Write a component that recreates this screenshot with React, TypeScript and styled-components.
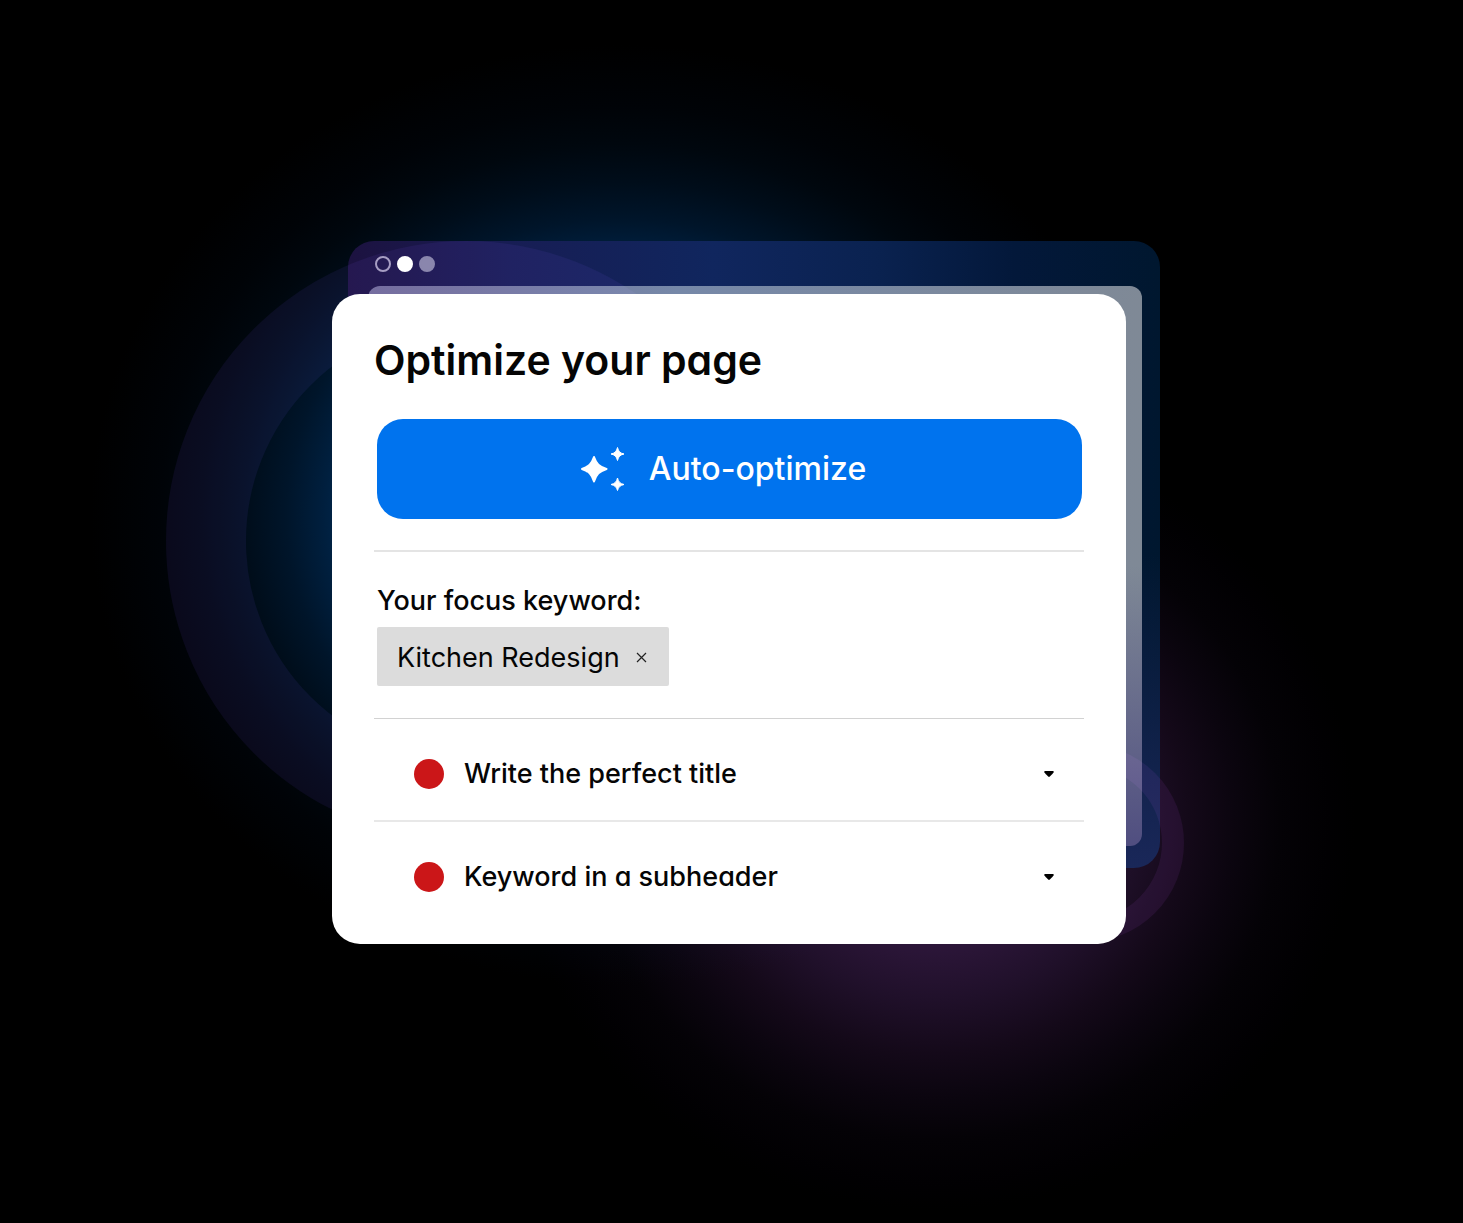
import React from "react";
import styled, { createGlobalStyle } from "styled-components";

const GlobalStyle = createGlobalStyle`
  *, *::before, *::after { box-sizing: border-box; }
  body {
    margin: 0;
    background: #000;
    color: #050505;
    font-family: Inter, "Liberation Sans", sans-serif;
    font-feature-settings: "cv11" 1;
  }
  button {
    font: inherit;
    font-feature-settings: inherit;
    color: inherit;
    border: 0;
    background: none;
    cursor: pointer;
  }
`;

const Page = styled.main`
  min-height: 100vh;
  display: flex;
  align-items: center;
  justify-content: center;
  padding: 15px 5px 0 0;
  overflow: hidden;
`;

const Stage = styled.div`
  position: relative;
  isolation: isolate;
  width: 100%;
  max-width: 794px;
`;

const Glow = styled.div<{ $x: number; $y: number; $rx: number; $ry: number; $stops: string }>`
  position: absolute;
  z-index: -4;
  left: ${(p) => p.$x - p.$rx}px;
  top: ${(p) => p.$y - p.$ry}px;
  width: ${(p) => p.$rx * 2}px;
  height: ${(p) => p.$ry * 2}px;
  background: radial-gradient(closest-side, ${(p) => p.$stops});
  mix-blend-mode: screen;
  pointer-events: none;
`;

const Ring = styled.div<{ $x: number; $y: number; $radius: number; $band: number; $color: string }>`
  position: absolute;
  z-index: -1;
  left: ${(p) => p.$x - p.$radius}px;
  top: ${(p) => p.$y - p.$radius}px;
  width: ${(p) => p.$radius * 2}px;
  height: ${(p) => p.$radius * 2}px;
  border: ${(p) => p.$band}px solid ${(p) => p.$color};
  border-radius: 50%;
  mix-blend-mode: screen;
  pointer-events: none;
`;

const BackWindow = styled.div`
  position: absolute;
  z-index: -2;
  inset: -53px -34px 76px 16px;
  display: flex;
  flex-direction: column;
  padding: 0 18px 22px 20px;
  border-radius: 26px;
  background:
    linear-gradient(180deg, transparent 50%, rgba(30, 42, 96, 0.85) 100%),
    linear-gradient(90deg, #1c1240 0%, #171d54 20%, #10265e 45%, #0a2250 65%, #03183a 82%, #00172f 100%);
`;

const WindowBar = styled.div`
  flex: none;
  height: 45px;
  display: flex;
  align-items: center;
  gap: 6px;
  padding-left: 7px;
`;

const WindowDot = styled.span<{ $fill: string; $ring: string }>`
  width: 16px;
  height: 16px;
  border-radius: 50%;
  background: ${(p) => p.$fill};
  border: 2px solid ${(p) => p.$ring};
`;

const WindowPane = styled.div`
  flex: 1;
  border-radius: 12px;
  background:
    linear-gradient(180deg, transparent 50%, #504e80 100%),
    linear-gradient(90deg, #6f6a96 0%, #7688a8 40%, #7f8996 100%);
`;

const Card = styled.section`
  padding: 40px 42px 21px;
  border-radius: 28px;
  background: #fff;
`;

const Title = styled.h1`
  margin: 0 0 33px;
  font-size: 41px;
  line-height: 52px;
  font-weight: 600;
  white-space: nowrap;
`;

const PrimaryButton = styled.button`
  display: flex;
  align-items: center;
  justify-content: center;
  gap: 24px;
  width: calc(100% - 5px);
  height: 100px;
  margin: 0 2px 31px 3px;
  padding: 0 12px 0 0;
  border-radius: 26px;
  background: #0073ee;
  color: #fff;
  font-size: 32px;
  line-height: 40px;
  font-weight: 500;
`;

const Keyword = styled.div`
  display: flex;
  flex-direction: column;
  align-items: flex-start;
  gap: 8px;
  padding: 31px 3px 32px;
  border-top: 2px solid #e4e4e4;
  border-bottom: 1px solid #d2d2d2;
`;

const KeywordLabel = styled.div`
  font-size: 27px;
  line-height: 36px;
  font-weight: 500;
`;

const Chip = styled.div`
  display: flex;
  align-items: center;
  gap: 16px;
  height: 59px;
  padding: 2px 22px 0 20px;
  border-radius: 2px;
  background: #dcdcdc;
  font-size: 27px;
  line-height: 36px;
`;

const ChipRemove = styled.button`
  display: flex;
  padding: 0;
`;

const TaskList = styled.ul`
  list-style: none;
  margin: 0;
  padding: 0;
`;

const Task = styled.li`
  & + & { border-top: 2px solid #e8e8e8; }
`;

const TaskButton = styled.button`
  display: flex;
  align-items: center;
  gap: 20px;
  width: 100%;
  height: 101px;
  padding: 9px 30px 0 40px;
  text-align: left;
  font-size: 27px;
  line-height: 36px;
  font-weight: 500;
`;

const Status = styled.span`
  flex: none;
  width: 30px;
  height: 30px;
  border-radius: 50%;
  background: #cb1618;
`;

const TaskName = styled.span`
  flex: 1;
`;

const Sparkles = () => (
  <svg width="44" height="44" viewBox="0 0 44 44" fill="#fff" stroke="#fff" strokeLinejoin="round" aria-hidden="true">
    <path strokeWidth="2" d="M13 10 C15.500 17 18 19.500 25.500 22 C18 24.500 15.500 27 13 34.500 C10.500 27 8 24.500 1 22 C8 19.500 10.500 17 13 10Z" />
    <path strokeWidth="1" d="M36.500 0.500 C37.500 4.500 39 6 43 7 C39 8 37.500 9.500 36.500 13.500 C35.500 9.500 34 8 30 7 C34 6 35.500 4.500 36.500 0.500Z" />
    <path strokeWidth="1" d="M36.500 31 C37.500 35 39 36.500 43 37.500 C39 38.500 37.500 40 36.500 43.500 C35.500 40 34 38.500 30 37.500 C34 36.500 35.500 35 36.500 31Z" />
  </svg>
);

const Cross = () => (
  <svg width="11" height="11" viewBox="0 0 11 11" fill="none" stroke="#222" strokeWidth="1.200" aria-hidden="true">
    <path d="M1 1 L10 10 M10 1 L1 10" />
  </svg>
);

const Caret = () => (
  <svg width="10" height="6" viewBox="0 0 10 6" fill="#000" aria-hidden="true">
    <path d="M1 0 H9 Q10 0 9.600 1.200 Q9 2.600 5.800 5.600 Q5 6.200 4.200 5.600 Q1 2.600 0.400 1.200 Q0 0 1 0Z" />
  </svg>
);

const tasks = ["Write the perfect title", "Keyword in a subheader"];

export default function App() {
  return (
    <Page>
      <GlobalStyle />
      <Stage>
        <Glow
          $x={288}
          $y={221}
          $rx={530}
          $ry={470}
          $stops="#003468 0%, #002c58 48%, #001f3e 56%, #00152a 63%, #000d1a 71%, #00070e 79%, #000307 87%, #000 100%"
        />
        <Glow
          $x={603}
          $y={526}
          $rx={420}
          $ry={390}
          $stops="#34204a 0%, #2c1639 32%, #20102a 46%, #140919 60%, #0b050f 71%, #040206 82%, #010002 94%, #000 100%"
        />
        <BackWindow aria-hidden="true">
          <WindowBar>
            <WindowDot $fill="transparent" $ring="#a39cbe" />
            <WindowDot $fill="#fff" $ring="#fff" />
            <WindowDot $fill="#8583a6" $ring="#8583a6" />
          </WindowBar>
          <WindowPane />
        </BackWindow>
        <Ring $x={134} $y={247} $radius={300} $band={80} $color="#0a0615" />
        <Ring $x={753} $y={549} $radius={99} $band={22} $color="#100615" />
        <Card>
          <Title>Optimize your page</Title>
          <PrimaryButton type="button">
            <Sparkles />
            Auto-optimize
          </PrimaryButton>
          <Keyword>
            <KeywordLabel>Your focus keyword:</KeywordLabel>
            <Chip>
              Kitchen Redesign
              <ChipRemove type="button" aria-label="Remove keyword">
                <Cross />
              </ChipRemove>
            </Chip>
          </Keyword>
          <TaskList>
            {tasks.map((name) => (
              <Task key={name}>
                <TaskButton type="button" aria-expanded={false}>
                  <Status />
                  <TaskName>{name}</TaskName>
                  <Caret />
                </TaskButton>
              </Task>
            ))}
          </TaskList>
        </Card>
      </Stage>
    </Page>
  );
}
